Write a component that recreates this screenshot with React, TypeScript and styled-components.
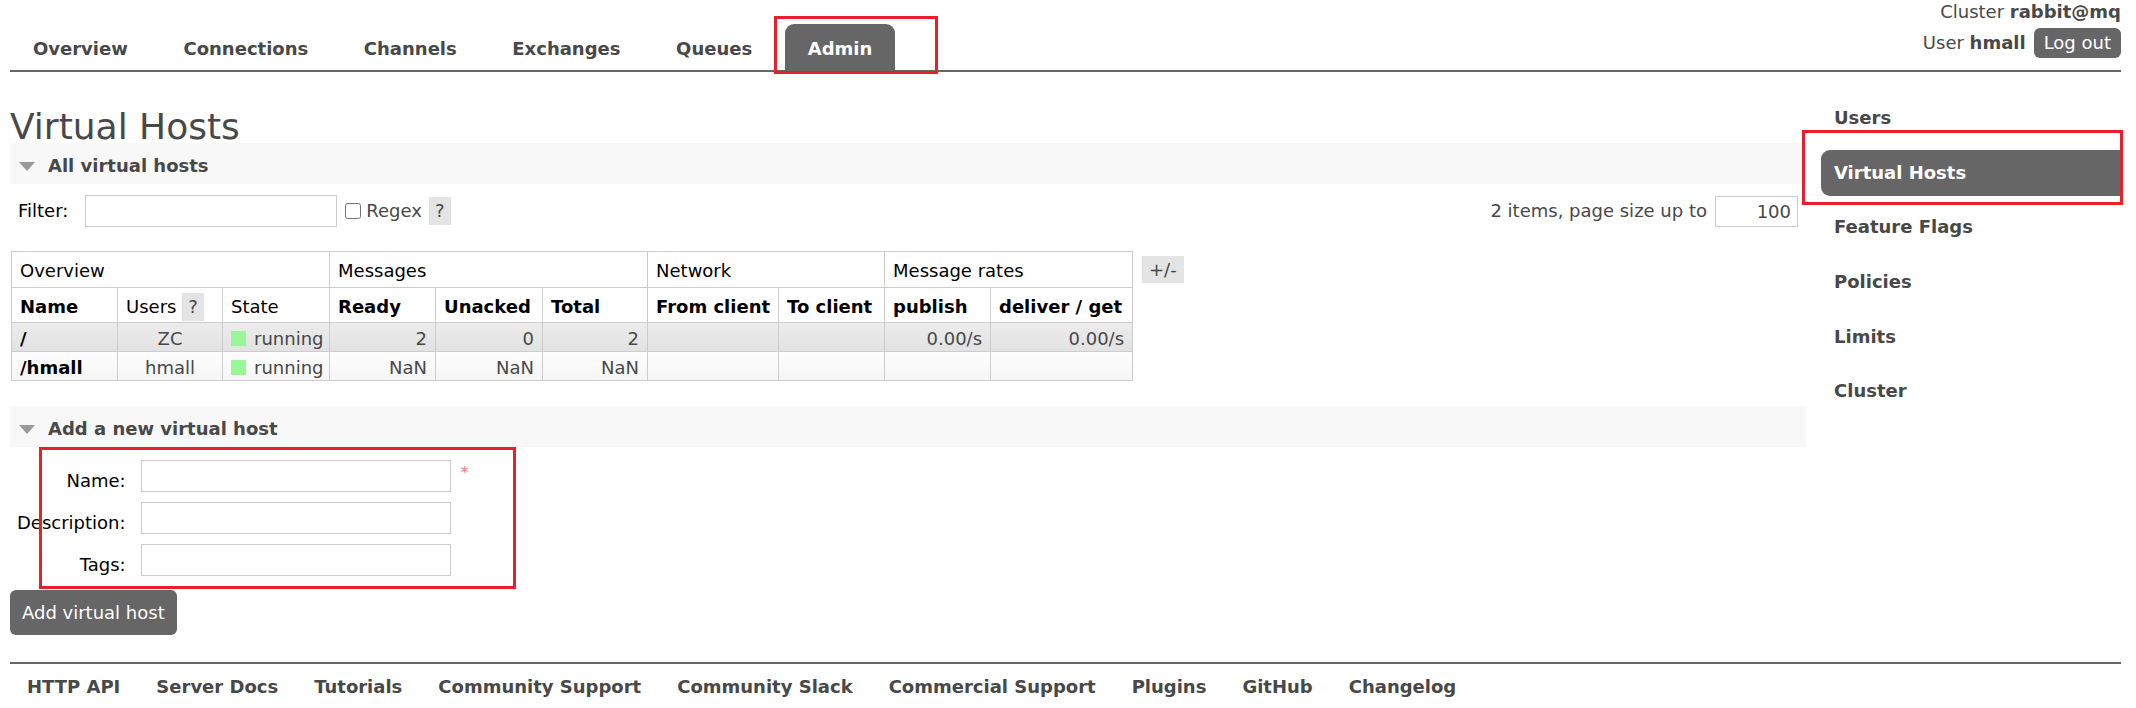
import React from "react";
import styled, { createGlobalStyle } from "styled-components";

const GlobalStyle = createGlobalStyle`
  html, body { margin: 0; padding: 0; background: #fff; }
  body {
    font-family: "DejaVu Sans", Verdana, sans-serif;
    font-size: 18px;
    line-height: 22px;
    color: #484848;
  }
  * { box-sizing: border-box; }
`;

const Page = styled.div`
  width: 2136px;
  padding: 0 15px 0 10px;
  position: relative;
`;

const Header = styled.header`
  display: flex;
  justify-content: space-between;
  align-items: flex-end;
  height: 72px;
  border-bottom: 2px solid #666;
`;

const Nav = styled.ul`
  display: flex;
  list-style: none;
  margin: 0;
  padding: 0;
`;

const Tab = styled.li`
  position: relative;
  margin-right: 9.6px;
`;

const TabLink = styled.a<{ $active?: boolean }>`
  display: block;
  padding: 13px 23px 10px;
  line-height: 23px;
  font-weight: bold;
  text-decoration: none;
  color: ${(p) => (p.$active ? "#fff" : "#484848")};
  background: ${(p) => (p.$active ? "#666" : "transparent")};
  border-radius: 9px 9px 0 0;
`;

const UserInfo = styled.div`
  align-self: flex-start;
  display: flex;
  flex-direction: column;
  align-items: flex-end;
  padding-top: 1px;
`;

const InfoLine = styled.div`
  line-height: 22px;
  white-space: nowrap;
`;

const UserLine = styled.div`
  display: flex;
  align-items: center;
  gap: 8px;
  margin-top: 5px;
  white-space: nowrap;
`;

const LogoutButton = styled.button`
  font: inherit;
  color: #fff;
  background: #666;
  border: none;
  border-radius: 6px;
  height: 30px;
  padding: 0 10px;
  line-height: 30px;
`;

const Body = styled.div`
  display: flex;
  gap: 15px;
  align-items: flex-start;
`;

const Main = styled.main`
  flex: 1;
  min-width: 0;
`;

const Title = styled.h1`
  font-size: 36px;
  font-weight: normal;
  line-height: 32px;
  margin: 39px 0 0;
  color: #484848;
`;

const SectionHeader = styled.h2<{ $gap?: number }>`
  display: flex;
  align-items: center;
  gap: 13px;
  margin: ${(p) => p.$gap ?? 0}px 0 0;
  padding: 12px 9px 7px;
  background: #f8f8f8;
  font-size: 18px;
  line-height: 22px;
  font-weight: bold;
  color: #484848;
`;

const FilterRow = styled.div`
  display: flex;
  justify-content: space-between;
  align-items: center;
  padding: 0 8px;
  margin-top: 11px;
`;

const FilterGroup = styled.div`
  display: flex;
  align-items: center;
`;

const BlackLabel = styled.label`
  color: #000;
`;

const TextInput = styled.input<{ $w: number }>`
  width: ${(p) => p.$w}px;
  height: 32px;
  border: 1px solid #ccc;
  font: inherit;
  padding: 0 6px;
  background: #fff;
`;

const FilterInput = styled(TextInput)`
  margin-left: 17px;
`;

const Checkbox = styled.input`
  width: 16px;
  height: 16px;
  margin: 0 5px 0 8px;
`;

const Help = styled.span`
  display: inline-block;
  background: #e4e4e4;
  padding: 3px 6px;
  line-height: 22px;
  color: #484848;
  font-weight: normal;
`;

const FilterHelp = styled(Help)`
  margin-left: 7px;
`;

const PageSizeInput = styled.input`
  width: 83px;
  height: 31px;
  border: 1px solid #ccc;
  font: inherit;
  color: #484848;
  text-align: right;
  padding: 0 6px;
  margin-left: 8px;
`;

const TableRow = styled.div`
  display: flex;
  align-items: flex-start;
  margin-top: 24px;
`;

const ListTable = styled.table`
  border-collapse: collapse;
  table-layout: fixed;
  width: 1121px;
  margin-left: 1px;
`;

const GroupCell = styled.th`
  border: 1px solid #ccc;
  height: 36px;
  padding: 3px 8px 0;
  text-align: left;
  font-weight: normal;
  color: #000;
  white-space: nowrap;
`;

const HeadCell = styled.th`
  border: 1px solid #ccc;
  height: 35px;
  padding: 3px 8px 0;
  text-align: left;
  font-weight: bold;
  color: #000;
  white-space: nowrap;
`;

const PlainHeadCell = styled(HeadCell)`
  font-weight: normal;
`;

const DataRow = styled.tr<{ $alt: 1 | 2 }>`
  background: ${(p) =>
    p.$alt === 1
      ? "linear-gradient(to bottom, #ececec, #e2e2e2)"
      : "linear-gradient(to bottom, #fdfdfd, #f6f6f6)"};
`;

const Cell = styled.td<{ $align?: "left" | "center" | "right"; $bold?: boolean }>`
  border: 1px solid #ccc;
  height: 29px;
  padding: 3px 8px 0;
  text-align: ${(p) => p.$align ?? "left"};
  font-weight: ${(p) => (p.$bold ? "bold" : "normal")};
  color: ${(p) => (p.$bold ? "#000" : "#484848")};
  white-space: nowrap;
`;

const StateDot = styled.span`
  display: inline-block;
  width: 15px;
  height: 15px;
  background: #98f898;
  margin-right: 8px;
  vertical-align: -1px;
`;

const ToggleColumns = styled.span`
  display: inline-block;
  margin: 5px 0 0 9px;
  background: #e4e4e4;
  padding: 0 7px;
  line-height: 27px;
  height: 27px;
  color: #484848;
`;

const FormArea = styled.div`
  position: relative;
`;

const FormGrid = styled.div`
  display: grid;
  grid-template-columns: auto 310px auto;
  column-gap: 15px;
  row-gap: 10px;
  padding: 13px 0 0 7px;
  align-items: start;
  justify-content: start;
`;

const FormLabel = styled.label`
  text-align: right;
  color: #000;
  white-space: nowrap;
  padding-top: 10px;
`;

const Required = styled.span`
  color: #f77;
  margin: 2px 0 0 -5px;
  font-size: 16px;
  line-height: 22px;
`;

const SubmitButton = styled.button`
  font: inherit;
  color: #fff;
  background: #666;
  border: none;
  border-radius: 6px;
  height: 45px;
  padding: 0 12px;
  margin-top: 14px;
  line-height: 45px;
`;

const Sidebar = styled.nav`
  width: 300px;
  flex-shrink: 0;
`;

const SideList = styled.ul`
  list-style: none;
  margin: 23px 0 0;
  padding: 0;
`;

const SideItem = styled.li`
  position: relative;
  margin-bottom: 8.7px;
`;

const SideLink = styled.a<{ $active?: boolean }>`
  display: block;
  padding: 12px 13px;
  line-height: 22px;
  font-weight: bold;
  text-decoration: none;
  border-radius: 9px 0 0 9px;
  color: ${(p) => (p.$active ? "#fff" : "#484848")};
  background: ${(p) => (p.$active ? "#666" : "transparent")};
`;

const Footer = styled.footer`
  margin-top: 27px;
  border-top: 2px solid #666;
  padding: 12px 0 0 17px;
`;

const FooterLinks = styled.ul`
  display: flex;
  gap: 36px;
  list-style: none;
  margin: 0;
  padding: 0;
`;

const FooterLink = styled.a`
  font-weight: bold;
  color: #484848;
  text-decoration: none;
`;

const Annotation = styled.span`
  position: absolute;
  border: 3px solid #e8202a;
  pointer-events: none;
`;

const AdminMark = styled(Annotation)`
  top: -8px;
  left: -11px;
  right: -43px;
  bottom: -4px;
`;

const SideMark = styled(Annotation)`
  top: -20px;
  left: -19px;
  right: -2px;
  bottom: -9px;
`;

const FormMark = styled(Annotation)`
  top: 0;
  left: 29px;
  width: 477px;
  height: 142px;
`;

const Triangle = () => (
  <svg width="16" height="9" viewBox="0 0 16 9">
    <polygon points="0,0 16,0 8,9" fill="#999" />
  </svg>
);

const tabs = ["Overview", "Connections", "Channels", "Exchanges", "Queues", "Admin"];
const sideItems = ["Users", "Virtual Hosts", "Feature Flags", "Policies", "Limits", "Cluster"];
const footerItems = [
  "HTTP API",
  "Server Docs",
  "Tutorials",
  "Community Support",
  "Community Slack",
  "Commercial Support",
  "Plugins",
  "GitHub",
  "Changelog",
];

const colWidths = [106, 105, 107, 106, 107, 105, 131, 106, 106, 142];

type VHost = {
  name: string;
  users: string;
  ready: string;
  unacked: string;
  total: string;
  publish: string;
  deliver: string;
};

const vhosts: VHost[] = [
  { name: "/", users: "ZC", ready: "2", unacked: "0", total: "2", publish: "0.00/s", deliver: "0.00/s" },
  { name: "/hmall", users: "hmall", ready: "NaN", unacked: "NaN", total: "NaN", publish: "", deliver: "" },
];

export default function App() {
  return (
    <>
      <GlobalStyle />
      <Page>
        <Header>
          <Nav>
            {tabs.map((t) => (
              <Tab key={t}>
                <TabLink $active={t === "Admin"}>{t}</TabLink>
                {t === "Admin" && <AdminMark />}
              </Tab>
            ))}
          </Nav>
          <UserInfo>
            <InfoLine>
              Cluster <b>rabbit@mq</b>
            </InfoLine>
            <UserLine>
              <span>
                User <b>hmall</b>
              </span>
              <LogoutButton>Log out</LogoutButton>
            </UserLine>
          </UserInfo>
        </Header>

        <Body>
          <Main>
            <Title>Virtual Hosts</Title>
            <SectionHeader>
              <Triangle />
              All virtual hosts
            </SectionHeader>
            <FilterRow>
              <FilterGroup>
                <BlackLabel>Filter:</BlackLabel>
                <FilterInput $w={252} />
                <Checkbox type="checkbox" />
                <span>Regex</span>
                <FilterHelp>?</FilterHelp>
              </FilterGroup>
              <FilterGroup>
                <span>2 items, page size up to</span>
                <PageSizeInput defaultValue="100" />
              </FilterGroup>
            </FilterRow>

            <TableRow>
              <ListTable>
                <colgroup>
                  {colWidths.map((w, i) => (
                    <col key={i} style={{ width: w }} />
                  ))}
                </colgroup>
                <thead>
                  <tr>
                    <GroupCell colSpan={3}>Overview</GroupCell>
                    <GroupCell colSpan={3}>Messages</GroupCell>
                    <GroupCell colSpan={2}>Network</GroupCell>
                    <GroupCell colSpan={2}>Message rates</GroupCell>
                  </tr>
                  <tr>
                    <HeadCell>Name</HeadCell>
                    <PlainHeadCell>
                      Users <Help>?</Help>
                    </PlainHeadCell>
                    <PlainHeadCell>State</PlainHeadCell>
                    <HeadCell>Ready</HeadCell>
                    <HeadCell>Unacked</HeadCell>
                    <HeadCell>Total</HeadCell>
                    <HeadCell>From client</HeadCell>
                    <HeadCell>To client</HeadCell>
                    <HeadCell>publish</HeadCell>
                    <HeadCell>deliver / get</HeadCell>
                  </tr>
                </thead>
                <tbody>
                  {vhosts.map((v, i) => (
                    <DataRow key={v.name} $alt={i % 2 === 0 ? 1 : 2}>
                      <Cell $bold>{v.name}</Cell>
                      <Cell $align="center">{v.users}</Cell>
                      <Cell>
                        <StateDot />
                        running
                      </Cell>
                      <Cell $align="right">{v.ready}</Cell>
                      <Cell $align="right">{v.unacked}</Cell>
                      <Cell $align="right">{v.total}</Cell>
                      <Cell />
                      <Cell />
                      <Cell $align="right">{v.publish}</Cell>
                      <Cell $align="right">{v.deliver}</Cell>
                    </DataRow>
                  ))}
                </tbody>
              </ListTable>
              <ToggleColumns>+/-</ToggleColumns>
            </TableRow>

            <SectionHeader $gap={25}>
              <Triangle />
              Add a new virtual host
            </SectionHeader>
            <FormArea>
              <FormGrid>
                <FormLabel>Name:</FormLabel>
                <TextInput $w={310} />
                <Required>*</Required>
                <FormLabel>Description:</FormLabel>
                <TextInput $w={310} />
                <span />
                <FormLabel>Tags:</FormLabel>
                <TextInput $w={310} />
                <span />
              </FormGrid>
              <FormMark />
              <SubmitButton>Add virtual host</SubmitButton>
            </FormArea>
          </Main>

          <Sidebar>
            <SideList>
              {sideItems.map((s) => (
                <SideItem key={s}>
                  <SideLink $active={s === "Virtual Hosts"}>{s}</SideLink>
                  {s === "Virtual Hosts" && <SideMark />}
                </SideItem>
              ))}
            </SideList>
          </Sidebar>
        </Body>

        <Footer>
          <FooterLinks>
            {footerItems.map((f) => (
              <li key={f}>
                <FooterLink>{f}</FooterLink>
              </li>
            ))}
          </FooterLinks>
        </Footer>
      </Page>
    </>
  );
}
